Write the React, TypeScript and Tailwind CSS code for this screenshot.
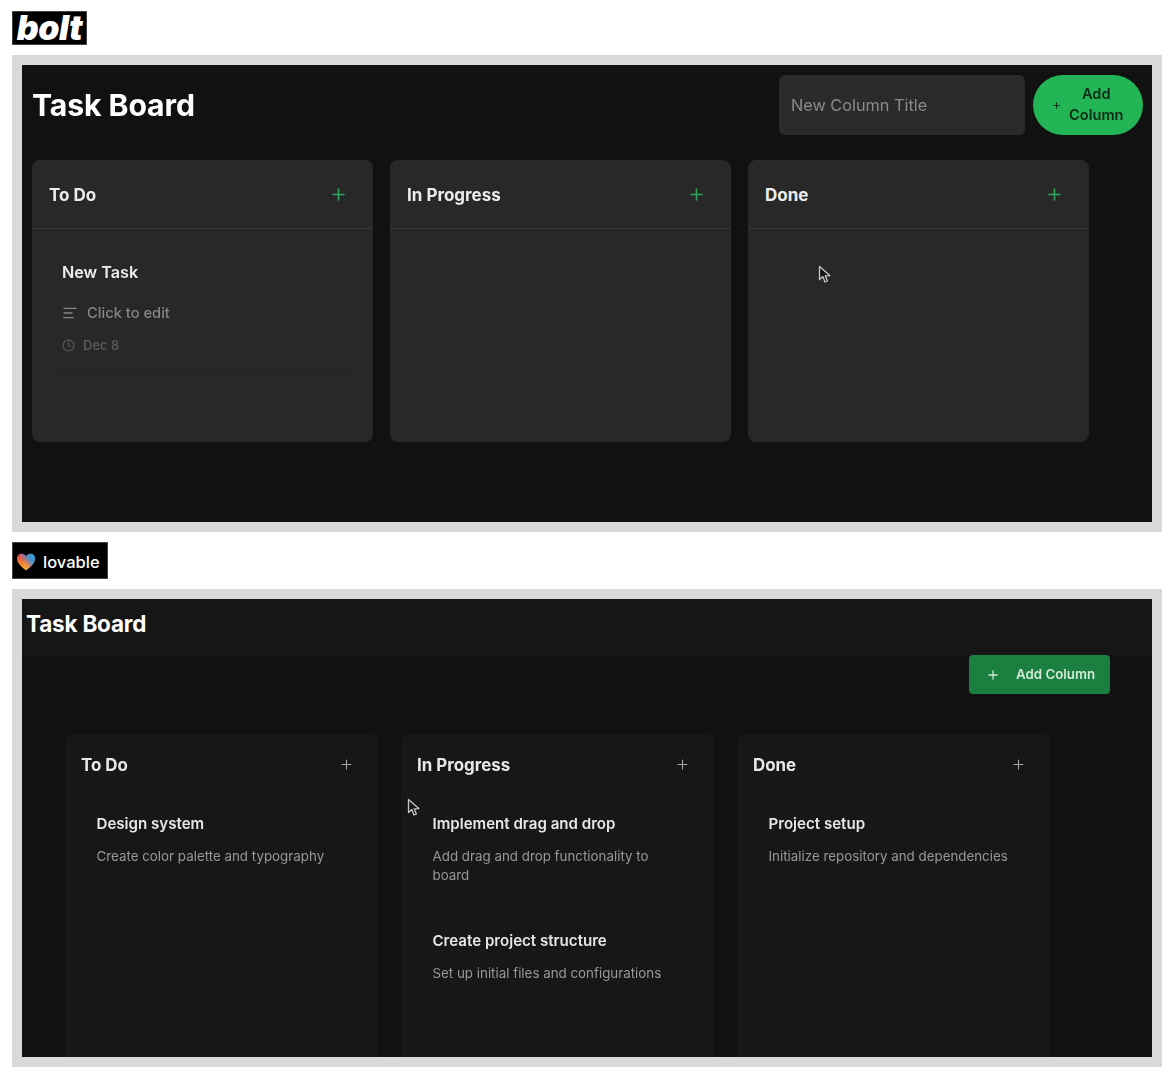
import { AlignLeft, Clock, Plus } from "lucide-react"

function Cursor({ className }: { className: string }) {
  return (
    <svg viewBox="0 0 14 20" className={className} fill="#161616" stroke="#c8c8c8" strokeWidth="1.3" strokeLinejoin="round">
      <path d="M1.5 1.5 L1.5 14.5 L4.8 11.6 L7 17 L9.4 16 L7.2 10.8 L11.8 10.6 Z" />
    </svg>
  )
}

function HeartLogo() {
  return (
    <svg viewBox="0 0 24 22" className="h-[18px] w-[20px]">
      <defs>
        <linearGradient id="heartFill" x1="0.1" y1="0" x2="0.5" y2="1">
          <stop offset="0" stopColor="#f0413c" />
          <stop offset="0.6" stopColor="#f58a32" />
          <stop offset="1" stopColor="#f9b233" />
        </linearGradient>
        <linearGradient id="heartBlue" x1="1" y1="0.1" x2="0.35" y2="0.6">
          <stop offset="0" stopColor="#12a8ea" />
          <stop offset="0.5" stopColor="#3f8fd8" stopOpacity="0.85" />
          <stop offset="1" stopColor="#c25fa0" stopOpacity="0" />
        </linearGradient>
      </defs>
      <path d="M12 21.5 C9 18.5 1 13.5 1 7 C1 3.4 3.6 1 6.6 1 C9 1 10.9 2.2 12 4.2 C13.1 2.2 15 1 17.4 1 C20.4 1 23 3.4 23 7 C23 13.5 15 18.5 12 21.5 Z" fill="url(#heartFill)" />
      <path d="M12 21.5 C9 18.5 1 13.5 1 7 C1 3.4 3.6 1 6.6 1 C9 1 10.9 2.2 12 4.2 C13.1 2.2 15 1 17.4 1 C20.4 1 23 3.4 23 7 C23 13.5 15 18.5 12 21.5 Z" fill="url(#heartBlue)" />
    </svg>
  )
}

function BoltColumn({ title, children }: { title: string; children?: React.ReactNode }) {
  return (
    <div className="h-[282px] w-[341px] rounded-lg bg-[#282828]">
      <div className="flex h-[69px] items-center justify-between border-b border-[#363636] pl-[17px] pr-[25px] pt-1">
        <h2 className="text-[17px] font-bold text-[#ececec]">{title}</h2>
        <Plus className="-mt-1 h-[19px] w-[19px] text-[#2fa55c]" strokeWidth={2} />
      </div>
      {children}
    </div>
  )
}

function LovableColumn({ title, children }: { title: string; children?: React.ReactNode }) {
  return (
    <div className="h-[323px] w-[313px] rounded-t-lg bg-[#171717]">
      <div className="flex items-center justify-between pl-4 pr-6 pt-[19px]">
        <h2 className="text-[16.9px] leading-[24px] font-bold text-[#e8e8e8]">{title}</h2>
        <Plus className="-mt-[2px] h-[15px] w-[15px] text-[#a3a3a3]" strokeWidth={1.75} />
      </div>
      <div className="pt-[10px]">{children}</div>
    </div>
  )
}

function LovableTask({ title, text }: { title: string; text: string }) {
  return (
    <div className="mx-4 border-b border-[#191919] pb-[18px] pl-[15.5px] pr-4 pt-[27px]">
      <h3 className="text-[15.1px] leading-[20px] font-semibold text-[#e6e6e6]">{title}</h3>
      <p className="mt-[13px] text-[13.35px] leading-[19px] text-[#989898]">{text}</p>
    </div>
  )
}

export default function App() {
  return (
    <div className="min-h-[1077px] bg-white px-3 pt-[11px] font-['Inter',sans-serif]">
      <div className="flex h-[34px] w-[75px] items-center justify-center border border-[#444] bg-black">
        <span className="text-[34px] leading-none font-black italic tracking-[-0.5px] text-white">bolt</span>
      </div>

      <section className="relative mt-[10px] h-[477px] w-[1150px] border-[10px] border-[#d9d9d9] bg-[#111111]">
        <div className="h-full blur-[0.6px]">
          <header className="mb-[15px] flex h-[80px] items-center pl-[10px] pr-[9px]">
            <h1 className="mt-[2px] text-[30.2px] font-bold tracking-[-0.1px] text-white">Task Board</h1>
            <input
              placeholder="New Column Title"
              className="ml-auto h-[60px] w-[246px] rounded-md bg-[#2a2a2a] px-3 text-[16.3px] placeholder:text-[#8a8a8a]"
            />
            <button className="ml-2 flex h-[60px] w-[110px] items-center gap-[8px] rounded-full bg-[#22b455] pl-[19px] pr-[20px] text-[14.6px] leading-[21px] font-semibold text-[#0d2a17]">
              <Plus className="h-[9px] w-[9px] shrink-0" strokeWidth={2.5} />
              <span className="text-center">Add Column</span>
            </button>
          </header>
          <div className="flex gap-[17px] pl-[10px]">
            <BoltColumn title="To Do">
              <div className="ml-5 mr-[17px] border-b-2 border-[#252525] pb-[17px] pt-[32px]">
                <h3 className="pl-[10px] text-[16.2px] leading-[22px] font-semibold text-[#ededed]">New Task</h3>
                <div className="mt-[20px] flex items-center gap-[9px] pl-[10px] text-[14.7px] leading-[20px] font-medium text-[#858585]">
                  <AlignLeft className="h-4 w-4" strokeWidth={2} />
                  <span>Click to edit</span>
                </div>
                <div className="mt-[13px] flex items-center gap-2 pl-[10px] text-[13px] leading-[18px] font-medium text-[#5c5c5c]">
                  <Clock className="h-[13px] w-[13px]" strokeWidth={2} />
                  <span>Dec 8</span>
                </div>
              </div>
            </BoltColumn>
            <BoltColumn title="In Progress" />
            <BoltColumn title="Done" />
          </div>
        </div>
        <Cursor className="absolute left-[796px] top-[200px] h-[20px] w-[14px]" />
      </section>

      <div className="mt-[10px] flex h-[37px] w-[96px] items-center gap-[7px] border border-[#444] bg-black pl-[3px] pt-[2px]">
        <HeartLogo />
        <span className="mt-[2px] text-[16.5px] leading-none font-medium text-white">lovable</span>
      </div>

      <section className="relative mt-[10px] h-[478px] w-[1150px] overflow-hidden border-[10px] border-[#d9d9d9] bg-[#111111]">
        <div className="h-full blur-[0.6px]">
          <header className="flex h-[56px] items-center border-b border-[#1c1c1c] bg-[#161616] pb-[6px] pl-1">
            <h1 className="text-[22.5px] font-bold tracking-[-0.2px] text-white">Task Board</h1>
          </header>
          <div className="flex justify-end pr-[42px]">
            <button className="flex h-[39px] w-[141px] items-center gap-4 rounded bg-[#1b7f40] pl-[17px] pt-[1px] text-[13.3px] font-semibold text-[#d2e8d9]">
              <Plus className="h-[14px] w-[14px]" strokeWidth={2.25} />
              <span>Add Column</span>
            </button>
          </div>
          <div className="mt-[40px] flex gap-[23px] pl-[43px]">
            <LovableColumn title="To Do">
              <LovableTask title="Design system" text="Create color palette and typography" />
            </LovableColumn>
            <LovableColumn title="In Progress">
              <LovableTask title="Implement drag and drop" text="Add drag and drop functionality to board" />
              <LovableTask title="Create project structure" text="Set up initial files and configurations" />
            </LovableColumn>
            <LovableColumn title="Done">
              <LovableTask title="Project setup" text="Initialize repository and dependencies" />
            </LovableColumn>
          </div>
        </div>
        <Cursor className="absolute left-[385px] top-[199px] h-[20px] w-[14px]" />
      </section>
    </div>
  )
}
